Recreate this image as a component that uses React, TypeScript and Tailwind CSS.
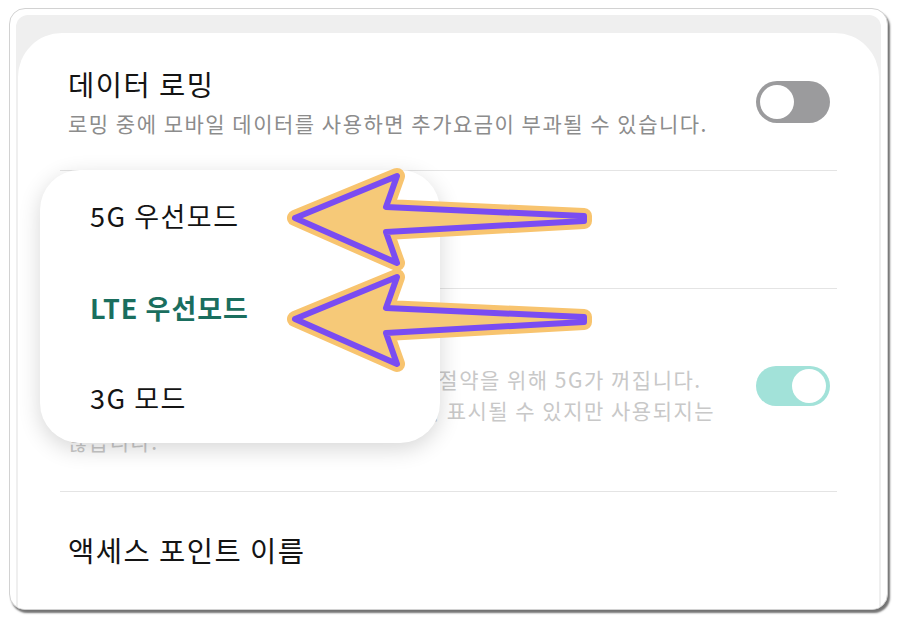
import React from "react";

const font = { fontFamily: '"Noto Sans CJK KR", "Noto Sans", sans-serif' };

function Toggle({ on }: { on: boolean }) {
  return on ? (
    <div className="w-[74px] h-[40px] rounded-full bg-[#a2e2d9] flex items-center justify-end pr-[4px]">
      <div className="w-[34px] h-[34px] rounded-full bg-white" />
    </div>
  ) : (
    <div className="w-[74px] h-[42px] rounded-full bg-[#9b9b9d] flex items-center pl-[4px]">
      <div className="w-[34px] h-[34px] rounded-full bg-white" />
    </div>
  );
}

function Arrow({ dy }: { dy: number }) {
  const d = "M295 218 L397 176 L386 207 L584 216 L584 221 L386 232 L397 263 Z";
  return (
    <g transform={`translate(0 ${dy})`}>
      <path d={d} fill="#f8c46f" stroke="#f8c46f" strokeWidth={16} strokeLinejoin="round" strokeLinecap="round" />
      <path d={d} fill="#f6c978" stroke="#7a4cf2" strokeWidth={6} strokeLinejoin="round" strokeLinecap="round" />
    </g>
  );
}

export default function App() {
  return (
    <div className="relative w-[898px] h-[621px] bg-white pt-[8px] pl-[9px]" style={font}>
      <div className="w-[879px] h-[602px] rounded-[16px] border border-[#d2d2d2] bg-white shadow-[2px_3px_2px_rgba(0,0,0,0.55)] pt-[6px] px-[6px] overflow-hidden flex flex-col">
        <div className="flex-1 rounded-t-[12px] bg-[#efefef] pt-[18px] px-[2px] flex flex-col">
          <div className="relative flex-1 bg-white rounded-t-[44px] px-[42px] flex flex-col">
            {/* Row 1 */}
            <div className="h-[137px] flex items-center justify-between pl-[8px] pr-[7px]">
              <div className="flex flex-col">
                <div className="text-[28.5px] leading-[36px] tracking-[1.5px] text-[#141414]">데이터 로밍</div>
                <div className="mt-[6px] text-[21px] leading-[30px] tracking-[1.5px] text-[#8c8c8c]">
                  로밍 중에 모바일 데이터를 사용하면 추가요금이 부과될 수 있습니다.
                </div>
              </div>
              <Toggle on={false} />
            </div>
            <div className="h-px bg-[#e4e4e4]" />
            {/* Row 2 */}
            <div className="h-[117px] flex flex-col justify-center pl-[8px]">
              <div className="text-[28.5px] leading-[36px] tracking-[1.5px] text-[#141414]">네트워크 모드</div>
              <div className="text-[21px] leading-[30px] tracking-[1.5px] text-[#1a6e5e]">LTE 우선모드</div>
            </div>
            <div className="h-px bg-[#e4e4e4]" />
            {/* Row 3 */}
            <div className="h-[202px] flex items-center justify-between pl-[8px] pr-[7px]">
              <div className="flex flex-col">
                <div className="text-[28.5px] leading-[36px] tracking-[1.5px] text-[#c4c4c4]">5G 자동 끄기</div>
                <div className="mt-[5px] text-[21px] leading-[31px] tracking-[1.5px] text-[#c8c8c8] whitespace-nowrap">
                  화면이 꺼져 있는 동안 데이터와 배터리 절약을 위해 5G가 꺼집니다.
                  <br />
                  기기의 5G 아이콘이 계속 상태 표시줄에 표시될 수 있지만 사용되지는
                  <br />
                  않습니다.
                </div>
              </div>
              <div className="mb-[8px]">
                <Toggle on={true} />
              </div>
            </div>
            <div className="h-px bg-[#e4e4e4]" />
            {/* Row 4 */}
            <div className="h-[116px] flex items-center pl-[8px]">
              <div className="text-[28.5px] leading-[36px] tracking-[1.5px] text-[#141414]">액세스 포인트 이름</div>
            </div>

            {/* Popup menu */}
            <div className="absolute left-[22px] top-[137px] w-[400px] h-[273px] rounded-[40px] bg-white shadow-[0_6px_22px_rgba(0,0,0,0.16)] flex flex-col pl-[50px]">
              <div className="h-[92px] flex items-center text-[27px] tracking-[1.5px] text-[#141414]">5G 우선모드</div>
              <div className="h-[92px] flex items-center text-[27px] tracking-[1px] font-bold text-[#1a6e5e]">LTE 우선모드</div>
              <div className="h-[89px] flex items-center text-[27px] tracking-[1.5px] text-[#141414]">3G 모드</div>
            </div>
          </div>
        </div>
      </div>

      <svg className="absolute left-0 top-0 pointer-events-none" width={898} height={621} viewBox="0 0 898 621">
        <Arrow dy={0} />
        <Arrow dy={101} />
      </svg>
    </div>
  );
}
